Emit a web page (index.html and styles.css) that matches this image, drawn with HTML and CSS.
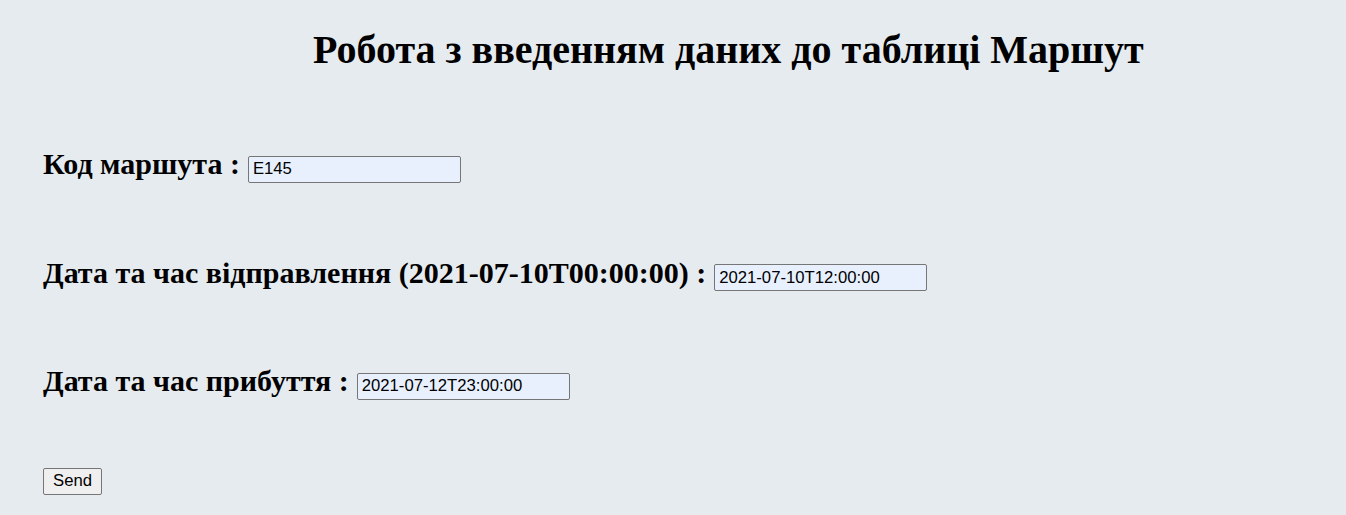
FILE: index.html
```html
<!DOCTYPE html>
<html>
<head>
<meta charset="utf-8">
<link rel="stylesheet" href="styles.css">
</head>
<body>
<div class="page">
  <h1 class="title">Робота з введенням даних до таблиці Маршут</h1>
  <form class="form">
    <div class="row"><span class="label">Код маршута :</span><input class="field" type="text" value="E145"></div>
    <div class="row"><span class="label">Дата та час відправлення (2021-07-10T00:00:00) :</span><input class="field" type="text" value="2021-07-10T12:00:00"></div>
    <div class="row"><span class="label">Дата та час прибуття :</span><input class="field" type="text" value="2021-07-12T23:00:00"></div>
    <div class="actions"><button class="btn" type="button">Send</button></div>
  </form>
</div>
</body>
</html>
```
FILE: styles.css
```css
html, body { margin: 0; padding: 0; }
body { background: #e6ebef; font-family: "Liberation Serif", "Times New Roman", serif; color: #000; }
.page { padding: 26px 0 0 43px; }
.title { margin: 0; padding-left: 270px; font-size: 40px; font-weight: bold; line-height: 48px; }
.form { display: flex; flex-direction: column; gap: 75px; margin-top: 75px; }
.row { display: flex; align-items: baseline; }
.label { font-size: 30px; font-weight: bold; margin-right: 8px; line-height: 30px; }
.field { box-sizing: border-box; width: 213px; height: 27px; margin: 0; padding: 1px 4px; border: 1px solid #767676; border-radius: 2px; background: #e8f0fe; font-family: "Liberation Sans", Arial, sans-serif; font-size: 16.7px; color: #000; }
.actions { display: flex; margin-top: -7px; }
.btn { box-sizing: border-box; height: 27px; padding: 1px 9px; border: 1px solid #767676; border-radius: 2px; background: #efefef; font-family: "Liberation Sans", Arial, sans-serif; font-size: 16.7px; color: #000; }
```
